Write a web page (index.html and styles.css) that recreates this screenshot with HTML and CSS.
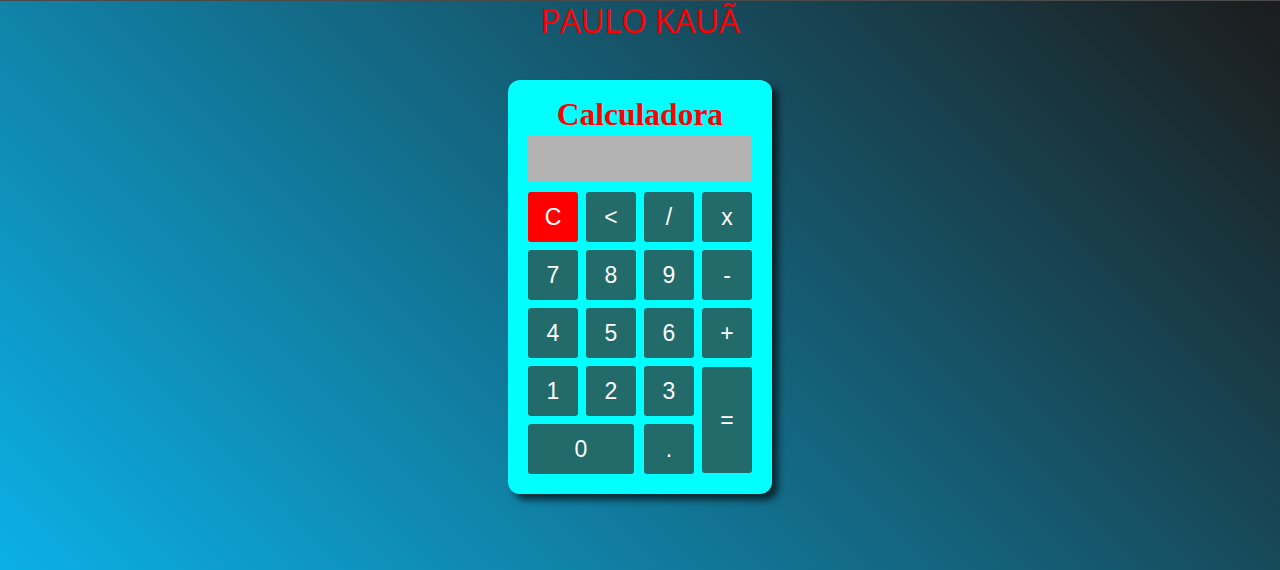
FILE: index.html
```html
<!DOCTYPE html>
<html lang="pt-BR">
<head>
<meta charset="utf-8">
<title>Calculadora</title>
<link rel="stylesheet" href="styles.css">
</head>
<body>
<h1 class="author">PAULO KAUÃ</h1>
<main class="calc">
  <h2 class="calc-title">Calculadora</h2>
  <div class="display"></div>
  <div class="keys">
    <button class="key key-clear">C</button>
    <button class="key">&lt;</button>
    <button class="key">/</button>
    <button class="key">x</button>
    <button class="key">7</button>
    <button class="key">8</button>
    <button class="key">9</button>
    <button class="key">-</button>
    <button class="key">4</button>
    <button class="key">5</button>
    <button class="key">6</button>
    <button class="key">+</button>
    <button class="key">1</button>
    <button class="key">2</button>
    <button class="key">3</button>
    <button class="key key-equals">=</button>
    <button class="key key-zero">0</button>
    <button class="key">.</button>
  </div>
</main>
</body>
</html>
```
FILE: styles.css
```css
html, body {
  margin: 0;
  padding: 0;
}
body {
  min-height: 570px;
  box-sizing: border-box;
  border-top: 1px solid #4a4a4a;
  background: linear-gradient(45deg, #0bb0e6 0%, #1c1c1c 100%);
  display: flex;
  flex-direction: column;
  align-items: center;
}
.author {
  margin: 0;
  font-family: "Open Sans", "Liberation Sans", sans-serif;
  font-weight: 400;
  font-size: 33px;
  line-height: 40px;
  color: #ff0000;
  letter-spacing: -0.3px;
}
.calc {
  margin-top: 39px;
  width: 264px;
  box-sizing: border-box;
  padding: 16px 20px 20px;
  background: #00ffff;
  border-radius: 12px;
  box-shadow: 6px 6px 7px rgba(0, 0, 0, 0.65);
  display: flex;
  flex-direction: column;
}
.calc-title {
  margin: 0 0 3px;
  text-align: center;
  font-family: "Liberation Serif", "Times New Roman", serif;
  font-weight: 700;
  font-size: 31.5px;
  line-height: 37px;
  color: #ff0000;
}
.display {
  height: 46px;
  background: #b3b3b3;
  margin-bottom: 10px;
}
.keys {
  display: grid;
  grid-template-columns: repeat(4, 50px);
  grid-auto-rows: 50px;
  gap: 8px;
}
.key {
  border: none;
  border-radius: 3px;
  padding: 0;
  margin: 0;
  background: #236a6b;
  color: #ffffff;
  font-family: "Liberation Sans", Arial, sans-serif;
  font-size: 23px;
}
.key-clear {
  background: #ff0000;
}
.key-equals {
  grid-column: 4;
  grid-row: 4 / span 2;
  margin-top: 1px;
  margin-bottom: 1px;
}
.key-zero {
  grid-column: 1 / span 2;
  margin-right: 2px;
}
```
